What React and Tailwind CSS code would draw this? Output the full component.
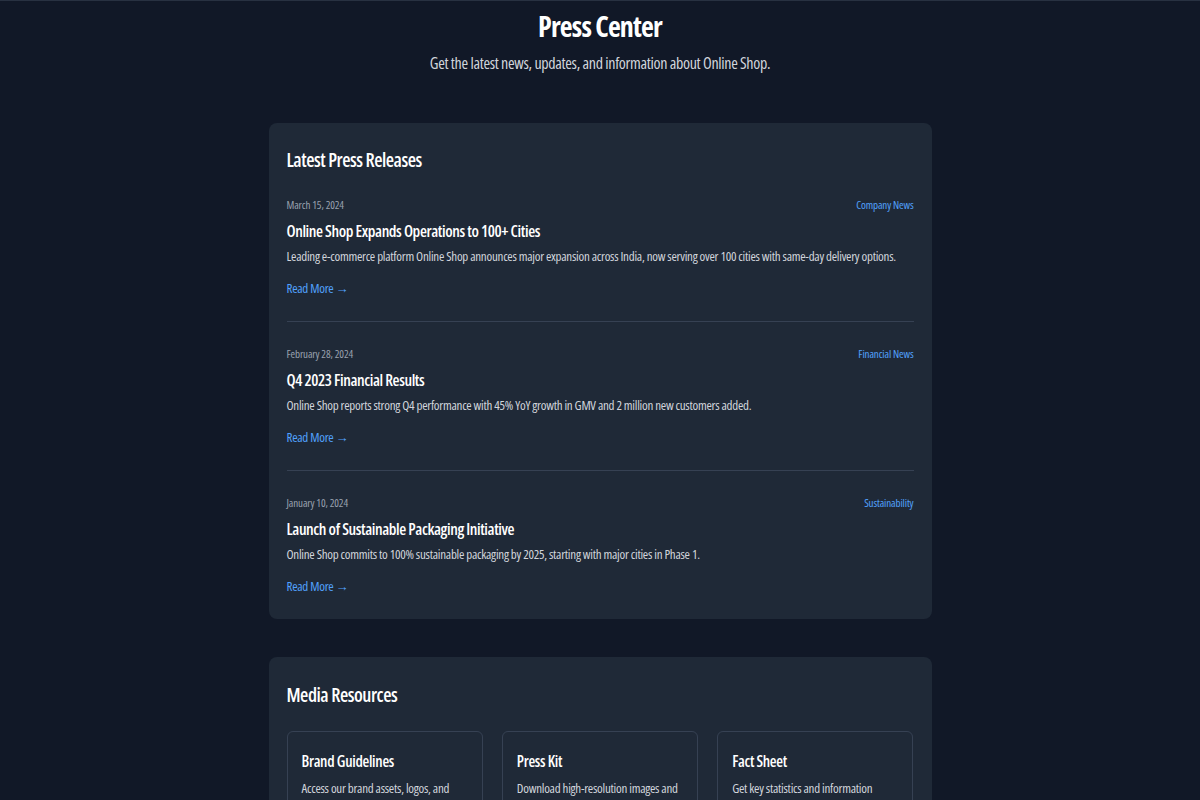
const releases = [
  {
    date: 'March 15, 2024',
    category: 'Company News',
    title: 'Online Shop Expands Operations to 100+ Cities',
    summary:
      'Leading e-commerce platform Online Shop announces major expansion across India, now serving over 100 cities with same-day delivery options.',
  },
  {
    date: 'February 28, 2024',
    category: 'Financial News',
    title: 'Q4 2023 Financial Results',
    summary:
      'Online Shop reports strong Q4 performance with 45% YoY growth in GMV and 2 million new customers added.',
  },
  {
    date: 'January 10, 2024',
    category: 'Sustainability',
    title: 'Launch of Sustainable Packaging Initiative',
    summary:
      'Online Shop commits to 100% sustainable packaging by 2025, starting with major cities in Phase 1.',
  },
];

const resources = [
  { title: 'Brand Guidelines', text: 'Access our brand assets, logos, and usage guidelines.' },
  { title: 'Press Kit', text: 'Download high-resolution images and company information.' },
  { title: 'Fact Sheet', text: 'Get key statistics and information about Online Shop.' },
];

const PressCenter = () => {
  return (
    <div className="min-h-screen bg-[#111827] border-t border-[#283141] font-['Open_Sans',sans-serif] [font-stretch:75%]">
      <div className="pt-[7px] text-center">
        <h1 className="text-[28px] leading-9 font-bold tracking-[-0.03em] text-white">Press Center</h1>
        <p className="mt-[7px] text-[16px] leading-6 tracking-[-0.02em] text-gray-300">
          Get the latest news, updates, and information about Online Shop.
        </p>
      </div>

      <div className="w-[663px] mx-auto mt-12 pb-10">
        <section className="bg-[#1f2937] rounded-lg px-[18px] pt-[23px] pb-[23px]">
          <h2 className="text-[19px] leading-7 font-semibold tracking-[-0.025em] text-white">Latest Press Releases</h2>
          <div className="mt-[23px]">
            {releases.map((r, i) => (
              <article
                key={r.title}
                className={i < releases.length - 1 ? 'pb-[23px] border-b border-gray-700 mb-6' : ''}
              >
                <div className="flex justify-between items-center h-4">
                  <span className="text-[11px] leading-4 tracking-[-0.01em] text-gray-400">{r.date}</span>
                  <span className="text-[11px] leading-4 font-medium tracking-[-0.01em] text-blue-400">{r.category}</span>
                </div>
                <h3 className="mt-[6px] text-[16px] leading-6 font-semibold tracking-[-0.025em] text-white">{r.title}</h3>
                <p className="mt-[3px] text-[13px] leading-5 tracking-[-0.02em] text-gray-300">{r.summary}</p>
                <a href="#" className="mt-3 block text-[13px] leading-5 font-medium tracking-[-0.02em] text-blue-400">
                  Read More →
                </a>
              </article>
            ))}
          </div>
        </section>

        <section className="mt-[38px] bg-[#1f2937] rounded-lg px-[18px] pt-6 pb-6">
          <h2 className="text-[19px] leading-7 font-semibold tracking-[-0.025em] text-white">Media Resources</h2>
          <div className="mt-[22px] grid grid-cols-3 gap-[19px]">
            {resources.map((res) => (
              <div key={res.title} className="border border-gray-700 rounded-md px-[14px] pt-[17px] pb-5">
                <h3 className="text-[15.5px] leading-6 font-semibold tracking-[-0.02em] text-white">{res.title}</h3>
                <p className="mt-[5px] text-[13px] leading-5 tracking-[-0.02em] text-gray-300">{res.text}</p>
              </div>
            ))}
          </div>
        </section>
      </div>
    </div>
  );
};

export default function App() {
  return <PressCenter />;
}
